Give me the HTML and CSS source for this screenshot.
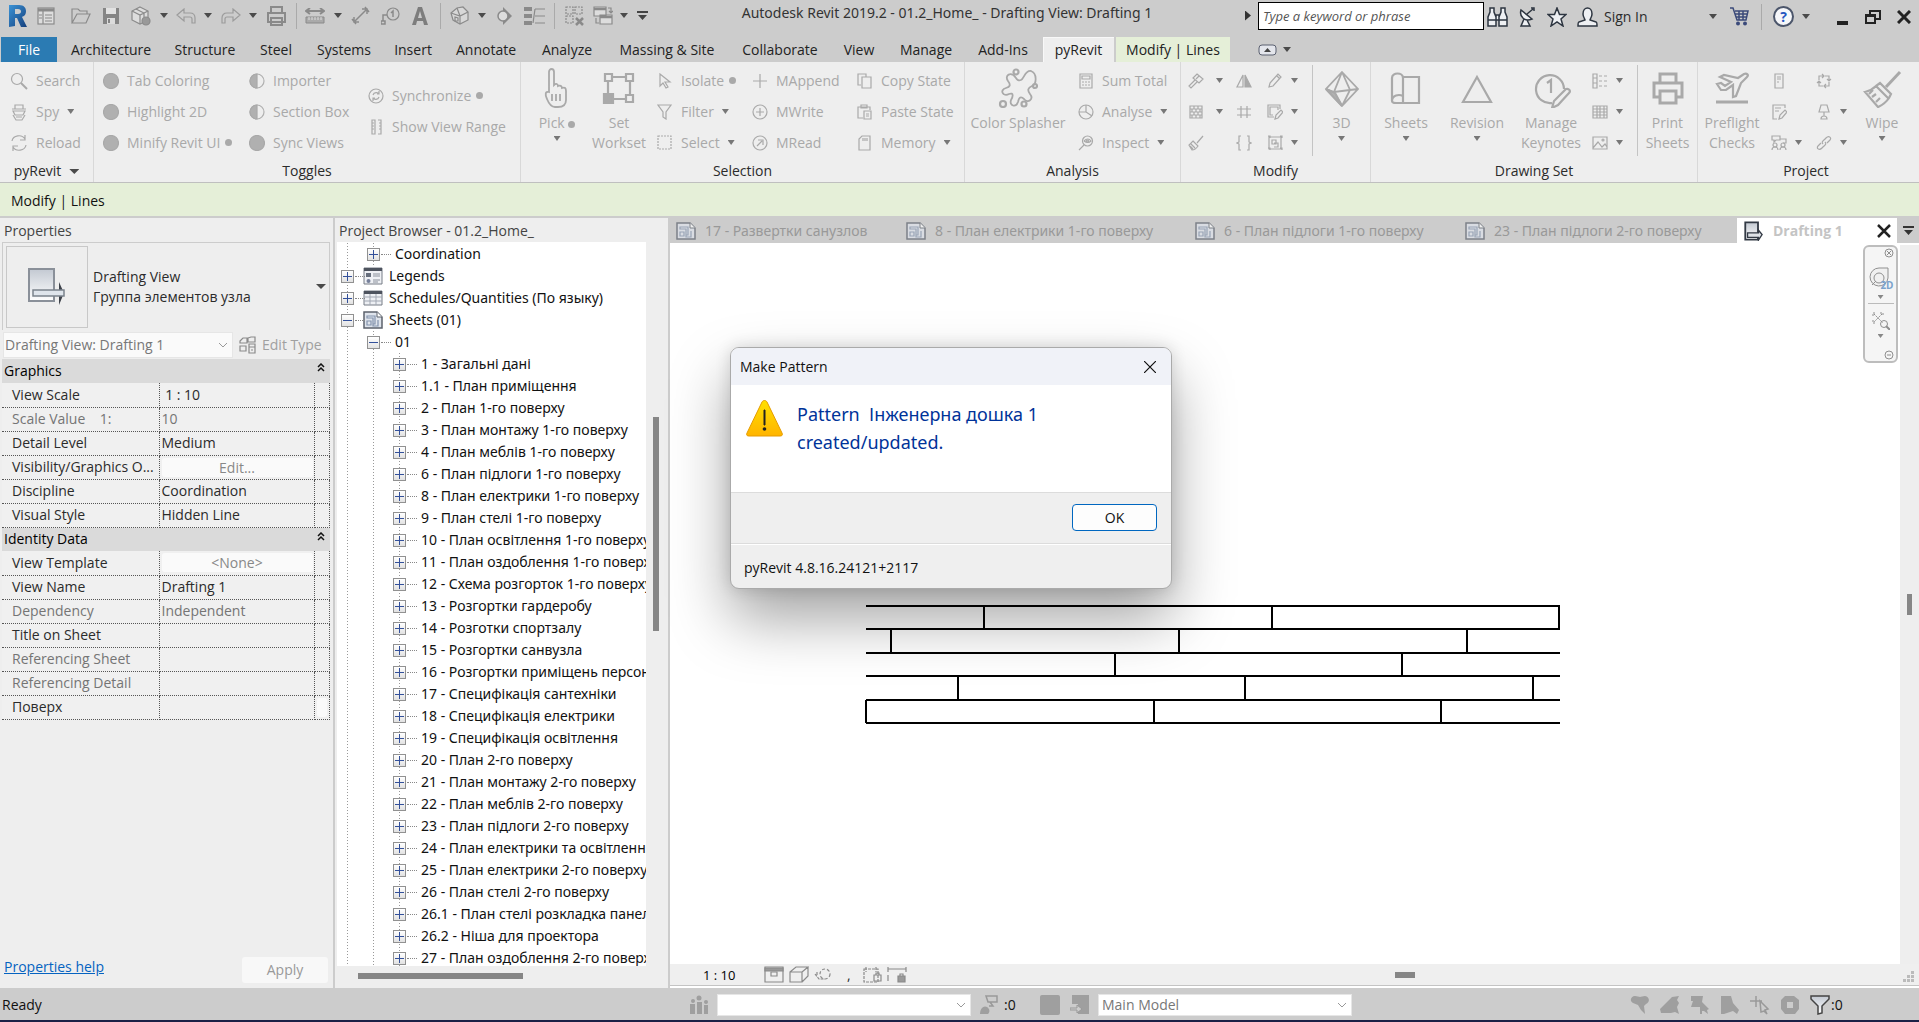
FILE: index.html
```html
<!DOCTYPE html>
<html lang="en">
<head>
<meta charset="utf-8">
<title>Autodesk Revit 2019.2 - 01.2_Home_ - Drafting View: Drafting 1</title>
<link rel="stylesheet" href="styles.css">
</head>
<body>
<svg class="sprite" aria-hidden="true">
  <defs>
    <linearGradient id="g-blue" x1="0" y1="0" x2="1" y2="1"><stop offset="0" stop-color="#3b93d6"/><stop offset="1" stop-color="#153f7c"/></linearGradient>
    <linearGradient id="g-warn" x1="0" y1="0" x2="0" y2="1"><stop offset="0" stop-color="#ffe000"/><stop offset="1" stop-color="#ffb400"/></linearGradient>
    <linearGradient id="g-metal" x1="0" y1="0" x2="0" y2="1"><stop offset="0" stop-color="#c3c9d2"/><stop offset="1" stop-color="#ffffff"/></linearGradient>
  </defs>
  <symbol id="sheet" viewBox="0 0 20 18"><path d="M1 1h13l5 5v11H1z" fill="#dfe4ec" stroke="#5c626c" stroke-width="1.500"/><path d="M14 1v5h5" fill="#fff" stroke="#5c626c"/><path d="M4 5h8v8h-2V7H4zM4 10h4v4H4zM10 13v2h5V9" fill="none" stroke="#8493ad" stroke-width="1.200"/></symbol>
  <symbol id="draft" viewBox="0 0 20 22"><path d="M1.500 1.500h14v19h-14z" fill="url(#g-metal)" stroke="#333a45" stroke-width="2"/><path d="M4 13h12v-3l4 5-4 6v-3H4z" fill="#dfe3e8" stroke="#333a45" stroke-width="1.500"/></symbol>
  <symbol id="half" viewBox="0 0 16 16"><circle cx="8" cy="8" r="7" fill="none" stroke="#b0b0b0"/><path d="M8 1a7 7 0 0 0 0 14z" fill="#b0b0b0"/></symbol>
  <symbol id="dot" viewBox="0 0 16 16"><circle cx="8" cy="8" r="7.500" fill="#b0b0b0"/></symbol>
</svg>

<header class="titlebar">
  <nav class="qat" aria-label="Quick access">
    <button aria-label="Revit"><svg width="20" height="24" viewBox="0 0 20 24"><path d="M1 1h10c5 0 7 3 7 6 0 4-2 5-4 6l5 10h-6L9 14H7v8l-6 1zM7 5v5h3c4 0 4-5 0-5z" fill="url(#g-blue)"/></svg></button>
    <button aria-label="Home"><svg width="18" height="18" viewBox="0 0 18 18" class="g"><rect x="1" y="1" width="16" height="16" fill="#ddd"/><path d="M1 3h16" stroke-width="3"/><path d="M6 4v13M8 8h7M8 11h7M8 14h7M2 8h3M2 11h3"/></svg></button>
    <button aria-label="Open"><svg width="20" height="18" viewBox="0 0 20 18" class="g"><path d="M1 16V2h6l2 2h7v3M1 16L6 7h13l-4 9z"/></svg></button>
    <button aria-label="Save"><svg width="18" height="18" viewBox="0 0 18 18"><path d="M1 1h16v16H1z" fill="#858585"/><path d="M4 1h10v6H4z" fill="#e2e2e2"/><path d="M5 11h8v6H5z" fill="#dcdcdc"/><path d="M6 12h2v4H6z" fill="#858585"/></svg></button>
    <button aria-label="Synchronize"><svg width="20" height="20" viewBox="0 0 20 20" class="g"><path d="M9 1l8 4v9l-8 4-8-4V5z" fill="#ddd"/><path d="M1 5l8 4 8-4M9 9v9M5 3l8 4v4"/><circle cx="15" cy="15" r="4" fill="#999"/></svg></button>
    <span class="caret"></span>
    <button aria-label="Undo"><svg width="20" height="16" viewBox="0 0 20 16" class="g l"><path d="M1 7l7-6v4h6c3 0 5 2 5 5v5h-3v-4c0-1-1-2-2-2H8v4z"/></svg></button>
    <span class="caret"></span>
    <button aria-label="Redo"><svg width="20" height="16" viewBox="0 0 20 16" class="g l"><path d="M19 7l-7-6v4H6c-3 0-5 2-5 5v5h3v-4c0-1 1-2 2-2h6v4z"/></svg></button>
    <span class="caret"></span>
    <button aria-label="Print"><svg width="21" height="20" viewBox="0 0 21 20" class="g w"><path d="M5 7V1h11v6M2 7h17v9H2zM5 12h11v7H5z"/></svg></button>
    <i class="sep"></i>
    <button aria-label="Measure"><svg width="20" height="16" viewBox="0 0 20 16" class="g w"><path d="M2 3h16M5 0L1 3l4 3M15 0l4 3-4 3"/><path d="M1 9h18v6H1z" fill="#aaa" stroke-width="1"/><path d="M4 9v3M7 9v3M10 9v3M13 9v3M16 9v3" stroke="#ddd" stroke-width="1"/></svg></button>
    <span class="caret"></span>
    <button aria-label="Dimension"><svg width="19" height="19" viewBox="0 0 19 19" class="g"><path d="M4 15L15 4M3 11v5h5M11 3h5v5M1 13l4 5M14 1l4 5" stroke-width="1.500"/></svg></button>
    <button aria-label="Tag"><svg width="19" height="18" viewBox="0 0 19 18" class="g"><circle cx="12" cy="7" r="6"/><path d="M10 6l2-2v6M6 8H2v6M0 14h4v3H0z" stroke-width="1.500"/></svg></button>
    <button aria-label="Text"><svg width="16" height="18" viewBox="0 0 16 18"><path d="M6 0h4l6 18h-4l-1-4H5l-1 4H0zM6 11h4L8 4z" fill="#7d7d7d"/></svg></button>
    <i class="sep"></i>
    <button aria-label="3D view"><svg width="19" height="19" viewBox="0 0 19 19" class="g"><path d="M1 7l6-5 6-1 5 5v8l-8 4-7-4z" fill="#d8d8d8"/><path d="M1 7l9 3 8-4M10 10v8M7 2l3 8M5 11v4h3v-3z"/></svg></button>
    <span class="caret"></span>
    <button aria-label="Section"><svg width="16" height="18" viewBox="0 0 16 18" class="g"><path d="M7 0l9 9-9 9z" fill="#8a8a8a" stroke="none"/><circle cx="7" cy="9" r="5" fill="#ddd" stroke-width="1.500"/></svg></button>
    <button aria-label="Thin lines"><svg width="21" height="20" viewBox="0 0 21 20" class="g"><path d="M0 3h8M0 10h8M0 17h8" stroke-width="4"/><path d="M11 3h10M11 10h10M11 17h10M11 3l-2 14"/></svg></button>
    <i class="sep"></i>
    <button aria-label="Close hidden windows"><svg width="19" height="20" viewBox="0 0 19 20" class="g"><path d="M1 1h7v7H1zM10 1h7v7h-7zM1 10h7v7H1z" stroke-dasharray="2 1"/><path d="M11 12l7 7M18 12l-7 7" stroke-width="2.500"/></svg></button>
    <button aria-label="Switch windows"><svg width="20" height="20" viewBox="0 0 20 20" class="g"><path d="M1 1h12v9H1zM7 9h12v9H7z" fill="#ddd"/><path d="M1 3h12M7 11h12" stroke-width="2.500"/><path d="M15 2h3v5M16 5l2 2 2-2M3 12v5h3"/></svg></button>
    <span class="caret"></span>
    <button aria-label="Customize"><svg width="11" height="9" viewBox="0 0 11 9"><path d="M0 0h11v2H0zM1 4h9L5.500 9z" fill="#444"/></svg></button>
  </nav>
  <h1>Autodesk Revit 2019.2 - 01.2_Home_ - Drafting View: Drafting 1</h1>
  <form class="search"><i class="tri-right"></i><input type="text" placeholder="Type a keyword or phrase" aria-label="Search help"></form>
  <div class="info">
    <button aria-label="Search"><svg width="21" height="20" viewBox="0 0 21 20" class="n"><path d="M3 1h4v4l2 5v9H1v-9l2-5zM14 1h4v4l2 5v9h-8v-9l2-5zM9 8h3v5H9zM1 13h8M12 13h8"/></svg></button>
    <button aria-label="Subscription"><svg width="17" height="20" viewBox="0 0 17 20" class="n"><path d="M2 3c-2 7 4 12 11 9zM8 7l6-5M12 1h3v3M5 12l-3 7h9l-3-6"/></svg></button>
    <button aria-label="Favorites"><svg width="20" height="20" viewBox="0 0 20 20" class="n"><path d="M10 1l2.500 6.500H19L14 12l2 7-6-4-6 4 2-7-5-4.500h6.500z"/></svg></button>
    <button aria-label="Account"><svg width="21" height="20" viewBox="0 0 21 20" class="n"><path d="M6 7c0-8 9-8 9 0 0 3-2 5-2 6l6 2c1 0 1 2 1 4H1c0-2 0-4 1-4l6-2c0-1-2-3-2-6z"/></svg></button>
    <button class="signin">Sign In</button>
    <span class="caret"></span>
    <button aria-label="Exchange"><svg width="21" height="19" viewBox="0 0 21 19"><path d="M1 1h3l4 12h9l2-9H6M6 7h12M7 10h11M10 4v9M14 4v9" fill="none" stroke="#3b4a7a" stroke-width="1.500"/><circle cx="9" cy="16.500" r="2" fill="#3b4a7a"/><circle cx="16" cy="16.500" r="2" fill="#3b4a7a"/></svg></button>
    <i class="sep"></i>
    <button class="help" aria-label="Help">?</button>
    <span class="caret"></span>
    <button aria-label="Minimize"><svg width="11" height="16" viewBox="0 0 11 16"><path d="M0 12h11v4H0z" fill="#222"/></svg></button>
    <button aria-label="Restore"><svg width="16" height="14" viewBox="0 0 16 14"><path d="M5 4V1h10v8h-4M1 5h9v8H1z" fill="none" stroke="#222" stroke-width="2"/><path d="M0 4h11v3H0z" fill="#222"/></svg></button>
    <button aria-label="Close"><svg width="14" height="14" viewBox="0 0 14 14"><path d="M1 1l12 12M13 1L1 13" stroke="#222" stroke-width="3"/></svg></button>
  </div>
</header>

<nav class="tabs" aria-label="Ribbon tabs">
  <button class="file">File</button><button>Architecture</button><button>Structure</button><button>Steel</button><button>Systems</button><button>Insert</button><button>Annotate</button><button>Analyze</button><button>Massing &amp; Site</button><button>Collaborate</button><button>View</button><button>Manage</button><button>Add-Ins</button><button class="on">pyRevit</button><button class="ctx">Modify | Lines</button>
  <button class="min" aria-label="Minimize ribbon"><svg width="19" height="12" viewBox="0 0 19 12"><rect x="1" y="1" width="17" height="10" rx="3" fill="#e4e6ec" stroke="#5b6070"/><path d="M6 8l3.500-4L13 8z" fill="#444"/></svg><span class="caret"></span></button>
</nav>

<section class="ribbon">
  <div class="group g-pyrevit">
    <div class="body">
      <div class="col wide">
        <button><svg viewBox="0 0 18 18"><circle cx="7" cy="7" r="5.500"/><path d="M11 11l6 6" stroke-width="2"/></svg>Search</button>
        <button><svg viewBox="0 0 18 18"><path d="M2 6h14M5 6V2h8v4M3 8h12l-2 4H5zM3 12l3 5h6l3-5M6 14h6"/></svg>Spy<span class="caret"></span></button>
        <button><svg viewBox="0 0 18 18"><path d="M2 7c1-6 10-7 13-2M15 1v5h-5M16 11c-1 6-10 7-13 2M3 17v-5h5"/></svg>Reload</button>
      </div>
    </div>
    <button class="label">pyRevit<span class="caret"></span></button>
  </div>

  <div class="group g-toggles">
    <div class="body">
      <div class="col">
        <button><svg><use href="#dot"/></svg>Tab Coloring</button>
        <button><svg><use href="#dot"/></svg>Highlight 2D</button>
        <button><svg><use href="#dot"/></svg>Minify Revit UI<i class="bullet"></i></button>
      </div>
      <div class="col">
        <button><svg><use href="#half"/></svg>Importer</button>
        <button><svg><use href="#half"/></svg>Section Box</button>
        <button><svg><use href="#dot"/></svg>Sync Views</button>
      </div>
      <div class="col mid">
        <button><svg viewBox="0 0 16 16"><circle cx="8" cy="8" r="7"/><path d="M5 7c1-3 5-3 6-1M11 3v3H9M11 9c-1 3-5 3-6 1M5 13v-3h2"/></svg>Synchronize<i class="bullet"></i></button>
        <button><svg viewBox="0 0 16 16"><path d="M4 1h3v14H4zM10 1h3v14h-3M4 4h2M4 7h2M4 10h2M11 4h2M11 7h2M11 10h2"/></svg>Show View Range</button>
      </div>
    </div>
    <div class="label">Toggles</div>
  </div>

  <div class="group g-selection">
    <div class="body">
      <button class="big"><svg viewBox="3 0 40 40"><path d="M15 24V4c0-4 5-4 5 0v13c2-2 4-1 4 1 2-1 4 0 4 2 3-1 4 0 4 3v9c0 5-3 7-8 7h-3c-4 0-6-3-8-8-2-4-2-8 2-7zM18 26v7M22 26v7M26 26v7" stroke-width="1.800"/></svg><span>Pick <i class="bullet"></i></span><span class="caret"></span></button>
      <button class="big"><svg viewBox="0 0 40 40"><path d="M6 6h7v7H6zM27 6h7v7h-7zM27 27h7v7h-7zM13 9h14M13 31h14M9 13v14M31 13v14"/><path d="M5 26h9v9H5z" fill="#a9a9a9"/></svg><span>Set<br>Workset</span></button>
      <div class="col pad">
        <button><svg viewBox="0 0 16 16"><path d="M3 1v12l3-3 3 5 2-1-3-5h5z"/></svg>Isolate<i class="bullet"></i></button>
        <button><svg viewBox="0 0 16 16"><path d="M1 1h13L9 8v7l-3-2V8z"/></svg>Filter<span class="caret"></span></button>
        <button><svg viewBox="0 0 16 16"><path d="M1 1h13v13H1z" stroke-dasharray="2 1"/></svg>Select<span class="caret"></span></button>
      </div>
      <div class="col">
        <button><svg viewBox="0 0 16 16"><path d="M8 1v14M1 8h14"/></svg>MAppend</button>
        <button><svg viewBox="0 0 16 16"><circle cx="8" cy="8" r="7"/><path d="M8 4v8M4 8h8"/></svg>MWrite</button>
        <button><svg viewBox="0 0 16 16"><circle cx="8" cy="8" r="7"/><path d="M5 11l5-5M6 5h5v5"/></svg>MRead</button>
      </div>
      <div class="col">
        <button><svg viewBox="0 0 16 16"><path d="M4 12H1V1h8v3M5 4h9v11H5z"/></svg>Copy State</button>
        <button><svg viewBox="0 0 16 16"><path d="M6 14H1V3h12v3M4 4V1h6v3zM7 7h7v8H7zM9 10h3M9 12h3"/></svg>Paste State</button>
        <button><svg viewBox="0 0 16 16"><path d="M5 1h8v14H2V4zM6 3v3M8 3v3M10 3v3"/></svg>Memory<span class="caret"></span></button>
      </div>
    </div>
    <div class="label">Selection</div>
  </div>

  <div class="group g-analysis">
    <div class="body">
      <button class="big"><svg viewBox="0 0 40 40"><path d="M18 10c-5-7-12-3-8 3 3 4 2 6-2 7-7 2-3 9 3 6 5-2 4 3 2 6-2 6 5 8 7 2 1-5 3-6 6-3 4 5 10 0 6-5-3-4-2-6 2-8 5-2 5-13-1-15-6-1-7 8-10 9-2 1-4 0-5-2z" stroke-width="1.800"/><circle cx="18" cy="4" r="2.500"/><circle cx="37" cy="18" r="2"/><circle cx="5" cy="36" r="3"/><circle cx="26" cy="36" r="2.500"/></svg><span>Color Splasher</span></button>
      <div class="col pad7">
        <button><svg viewBox="0 0 16 16"><path d="M2 1h12v14H2zM4 3h8v3H4zM4 9h2M7 9h2M10 9h2M4 12h2M7 12h2M10 12h2"/></svg>Sum Total</button>
        <button><svg viewBox="0 0 16 16"><circle cx="8" cy="8" r="7"/><path d="M8 1v7l6 4M8 8H1"/></svg>Analyse<span class="caret"></span></button>
        <button><svg viewBox="0 0 16 16"><circle cx="9.500" cy="6" r="5"/><path d="M6 10l-5 5M6 6q4-4 7 0-3 3-7 0"/><circle cx="9.500" cy="6" r="1"/></svg>Inspect<span class="caret"></span></button>
      </div>
    </div>
    <div class="label">Analysis</div>
  </div>

  <div class="group g-modify">
    <div class="body">
      <div class="col ico far">
        <button aria-label="Match"><svg viewBox="0 0 16 16"><path d="M9 1l6 5-4 4-6-5zM7 7l-6 6 2 2 6-6M11 3l-3 3"/></svg><span class="caret"></span></button>
        <button aria-label="Patterns"><svg viewBox="0 0 16 16"><path d="M2 2h12v12H2zM2 5h12M2 8h12M2 11h12M6 2v3M10 2v3M4 5v3M8 5v3M12 5v3M6 8v3M10 8v3M4 11v3M8 11v3M12 11v3"/></svg><span class="caret"></span></button>
        <button aria-label="Clean"><svg viewBox="0 0 16 16"><path d="M15 1L9 8M5 6l5 5c-2 3-4 4-6 4L1 10zM3 9l4 4M2 11l3 3"/></svg></button>
      </div>
      <div class="col ico">
        <button aria-label="Flip"><svg viewBox="0 0 16 16"><path d="M7 2v12H1z"/><path d="M9 2v12h6z" fill="#aaa"/></svg></button>
        <button aria-label="Number"><svg viewBox="0 0 16 16"><path d="M5 2v12M11 2v12M1 5h14M1 11h14"/></svg></button>
        <button aria-label="Braces"><svg viewBox="0 0 16 16"><path d="M5 1H3v6L1 8l2 1v6h2M11 1h2v6l2 1-2 1v6h-2"/></svg></button>
      </div>
      <div class="col ico">
        <button aria-label="Edit"><svg viewBox="0 0 16 16"><path d="M2 14l1-4 8-9 3 3-8 9zM10 3l3 3"/></svg><span class="caret"></span></button>
        <button aria-label="Regions"><svg viewBox="0 0 16 16"><path d="M7 13H1V1h12v4M6 11H3V3h8v3M8 15l1-4 5-5 2 2-5 6z"/></svg><span class="caret"></span></button>
        <button aria-label="Groups"><svg viewBox="0 0 16 16"><path d="M2 2h12v12H2zM5 5h4v4H5zM7 8h4v4H7M1 1h2v2M13 1h2v2M1 13h2v2M13 13h2v2"/></svg><span class="caret"></span></button>
      </div>
      <i class="sep"></i>
      <button class="big"><svg viewBox="0 0 40 40"><path d="M20 4l16 17-16 17L4 21zM20 4l-8 20 8 14M20 4l8 18-8 16M4 21l8 3 16-2 8-1" stroke-width="1.800"/><path d="M20 38l-7-13-9-4z" fill="#b3b3b3"/></svg><span>3D</span><span class="caret"></span></button>
    </div>
    <div class="label">Modify</div>
  </div>

  <div class="group g-drawing">
    <div class="body">
      <button class="big"><svg viewBox="0 0 40 40"><path d="M6 33V10c0-6 11-6 11 0v18c-4-2-11-1-11 5 0 2 2 2 4 2h23V9H17M17 28v7"/></svg><span>Sheets</span><span class="caret"></span></button>
      <button class="big"><svg viewBox="0 0 40 40"><path d="M20 9l14 25H6z"/></svg><span>Revision</span><span class="caret"></span></button>
      <button class="big"><svg viewBox="0 0 40 40"><path d="M21 35a14 14 0 1 1 12-14M16 15l4-3v13M21 40l2-7 12-12c3-1 5 2 3 4L27 37z"/></svg><span>Manage<br>Keynotes</span></button>
      <div class="col ico pad3">
        <button aria-label="Legends"><svg viewBox="0 0 16 16"><path d="M1 1h4v14H1zM1 5h4M1 10h4M7 3h3M12 3h3M7 8h3M12 8h3M7 13h3M12 13h3"/></svg><span class="caret"></span></button>
        <button aria-label="Schedules"><svg viewBox="0 0 16 16"><path d="M1 2h14v12H1zM1 5h14M1 8h14M1 11h14M5 2v12M8 2v12M12 2v12"/></svg><span class="caret"></span></button>
        <button aria-label="Images"><svg viewBox="0 0 16 16"><path d="M1 2h14v12H1zM1 13l5-6 4 5 3-3 2 3"/><circle cx="11" cy="5" r="1"/></svg><span class="caret"></span></button>
      </div>
      <i class="sep"></i>
      <button class="big"><svg viewBox="0 0 40 40" class="b"><path d="M12 15V6h16v9M12 29H6V15h28v14h-6M12 23h16v12H12z"/></svg><span>Print<br>Sheets</span></button>
    </div>
    <div class="label">Drawing Set</div>
  </div>

  <div class="group g-project">
    <div class="body">
      <button class="big"><svg viewBox="0 0 40 40"><path d="M4 34h32" stroke-width="3"/><path d="M5 16l4-1 4 3 6-4-11-5 4-2 14 3 6-4c3-1 5 1 3 3l-6 6-5 13-3 1v-12l-7 5H9z"/></svg><span>Preflight<br>Checks</span></button>
      <div class="col ico pad5">
        <button aria-label="Server"><svg viewBox="0 0 16 16"><path d="M4 1h8v14H4zM6 4h4M6 6h4M6 9h2"/></svg></button>
        <button aria-label="Notes"><svg viewBox="0 0 16 16"><path d="M6 15H2V1h12v3M4 4h6M4 7h4M8 15l1-4 5-5 2 2-5 6z"/></svg></button>
        <button aria-label="Team"><svg viewBox="0 0 16 16"><path d="M1 1h8v4H5L3 7V5H1zM9 4h6v4h-3"/><circle cx="4" cy="10" r="2"/><circle cx="12" cy="10" r="2"/><path d="M1 15c0-4 6-4 6 0M9 15c0-4 6-4 6 0"/></svg><span class="caret"></span></button>
      </div>
      <div class="col ico">
        <button aria-label="Transfer"><svg viewBox="0 0 16 16"><path d="M3 7V3h5M6 1l2 2-2 2M9 3h4v5M11 6l2 2 2-2M13 9v4H8M10 11l-2 2 2 2M7 13H3V8M1 10l2-2 2 2"/></svg></button>
        <button aria-label="Light"><svg viewBox="0 0 16 16"><path d="M5 1h6l2 7H3zM8 8v4M5 15c0-4 6-4 6 0z"/></svg><span class="caret"></span></button>
        <button aria-label="Links"><svg viewBox="0 0 16 16"><path d="M7 9c-2-2 0-3 3-6 3-3 6 0 4 2l-3 3M9 7c2 2 0 3-3 6-3 3-6 0-4-2l3-3"/></svg><span class="caret"></span></button>
      </div>
      <button class="big"><svg viewBox="0 0 40 40"><path d="M38 4L24 19" stroke-width="3"/><path d="M14 18l4-3 11 11-2 4c-4 6-9 8-11 9L3 24c4-1 8-3 11-6zM14 18l13 13M10 29l4-3M14 34l4-4M7 26l4-4"/></svg><span>Wipe</span><span class="caret"></span></button>
    </div>
    <div class="label">Project</div>
  </div>
</section>

<div class="context">Modify | Lines</div>

<main>
  <aside class="props">
    <h2>Properties</h2>
    <button class="type">
      <span class="thumb"><svg width="40" height="38" viewBox="0 0 40 38"><path d="M2 1h25v32H2z" fill="url(#g-metal)" stroke="#8a9099" stroke-width="2"/><path d="M32 14l5 11-5 12z" fill="#3c4149"/><path d="M6 22h31v6H6z" fill="#dfe5ec" stroke="#7b828c" stroke-width="1.500"/></svg></span>
      <span>Drafting View<br>Группа элементов узла</span>
      <span class="caret"></span>
    </button>
    <div class="filter">
      <select disabled aria-label="Element filter"><option>Drafting View: Drafting 1</option></select>
      <button disabled><svg width="18" height="18" viewBox="0 0 18 18" class="g"><path d="M1 5l3-3h4v5H1zM9 2l3-1h4v5H9zM1 10h6v5H1zM10 8h6v9h-6zM10 11h6M12 14h2"/></svg>Edit Type</button>
    </div>
    <table>
      <colgroup><col class="c1"><col><col class="c3"></colgroup>
      <tbody>
        <tr class="head"><th colspan="3" scope="colgroup">Graphics<svg width="8" height="9" viewBox="0 0 8 9"><path d="M1 4l3-3 3 3M1 8l3-3 3 3"/></svg></th></tr>
        <tr><th scope="row">View Scale</th><td>&nbsp;1 : 10</td><td></td></tr>
        <tr class="off"><th scope="row">Scale Value &nbsp; &nbsp;1:</th><td>10</td><td></td></tr>
        <tr><th scope="row">Detail Level</th><td>Medium</td><td></td></tr>
        <tr><th scope="row">Visibility/Graphics O...</th><td><button disabled>Edit...</button></td><td></td></tr>
        <tr><th scope="row">Discipline</th><td>Coordination</td><td></td></tr>
        <tr><th scope="row">Visual Style</th><td>Hidden Line</td><td></td></tr>
        <tr class="head"><th colspan="3" scope="colgroup">Identity Data<svg width="8" height="9" viewBox="0 0 8 9"><path d="M1 4l3-3 3 3M1 8l3-3 3 3"/></svg></th></tr>
        <tr><th scope="row">View Template</th><td><button disabled>&lt;None&gt;</button></td><td></td></tr>
        <tr><th scope="row">View Name</th><td>Drafting 1</td><td></td></tr>
        <tr class="off"><th scope="row">Dependency</th><td>Independent</td><td></td></tr>
        <tr><th scope="row">Title on Sheet</th><td></td><td></td></tr>
        <tr class="off"><th scope="row">Referencing Sheet</th><td></td><td></td></tr>
        <tr class="off"><th scope="row">Referencing Detail</th><td></td><td></td></tr>
        <tr><th scope="row">Поверх</th><td></td><td><button aria-label="Associate parameter"></button></td></tr>
      </tbody>
    </table>
    <footer><a href="#help">Properties help</a><button disabled>Apply</button></footer>
  </aside>

  <aside class="browser">
    <h2>Project Browser - 01.2_Home_</h2>
    <div class="tree">
      <ul>
        <li><ul><li><div><b></b>Coordination</div></li></ul></li>
        <li><div><b></b><svg width="20" height="18" viewBox="0 0 20 18"><path d="M1 1h18v16H1z" fill="#eef0f4" stroke="#777d86"/><path d="M1 1h18v3H1z" fill="#4d535e"/><path d="M3 6h5v4H3z" fill="#666e7c"/><path d="M10 7h7M10 9h7M10 13h7M10 15h5" stroke="#8a909b"/><circle cx="5.500" cy="14" r="2" fill="#76809a"/></svg>Legends</div></li>
        <li><div><b></b><svg width="20" height="16" viewBox="0 0 20 16"><path d="M1 1h18v14H1z" fill="#eef0f4" stroke="#777d86"/><path d="M1 1h18v3H1z" fill="#4d535e"/><path d="M1 7h18M1 11h18M7 4v11M13 4v11" stroke="#a2a8b3"/></svg>Schedules/Quantities (По языку)</div></li>
        <li><div><b class="open"></b><svg width="20" height="18"><use href="#sheet"/></svg>Sheets (01)</div>
          <ul>
            <li><div><b class="open"></b>01</div>
              <ul>
                <li><div><b></b>1 - Загальні дані</div></li>
                <li><div><b></b>1.1 - План приміщення</div></li>
                <li><div><b></b>2 - План 1-го поверху</div></li>
                <li><div><b></b>3 - План монтажу 1-го поверху</div></li>
                <li><div><b></b>4 - План меблів 1-го поверху</div></li>
                <li><div><b></b>6 - План підлоги 1-го поверху</div></li>
                <li><div><b></b>8 - План електрики 1-го поверху</div></li>
                <li><div><b></b>9 - План стелі 1-го поверху</div></li>
                <li><div><b></b>10 - План освітлення 1-го поверху</div></li>
                <li><div><b></b>11 - План оздоблення 1-го поверху</div></li>
                <li><div><b></b>12 - Схема розгорток 1-го поверху</div></li>
                <li><div><b></b>13 - Розгортки гардеробу</div></li>
                <li><div><b></b>14 - Розготки спортзалу</div></li>
                <li><div><b></b>15 - Розгортки санвузла</div></li>
                <li><div><b></b>16 - Розгортки приміщень персоналу</div></li>
                <li><div><b></b>17 - Специфікація сантехніки</div></li>
                <li><div><b></b>18 - Специфікація електрики</div></li>
                <li><div><b></b>19 - Специфікація освітлення</div></li>
                <li><div><b></b>20 - План 2-го поверху</div></li>
                <li><div><b></b>21 - План монтажу 2-го поверху</div></li>
                <li><div><b></b>22 - План меблів 2-го поверху</div></li>
                <li><div><b></b>23 - План підлоги 2-го поверху</div></li>
                <li><div><b></b>24 - План електрики та освітлення</div></li>
                <li><div><b></b>25 - План електрики 2-го поверху</div></li>
                <li><div><b></b>26 - План стелі 2-го поверху</div></li>
                <li><div><b></b>26.1 - План стелі розкладка панелей</div></li>
                <li><div><b></b>26.2 - Ніша для проектора</div></li>
                <li><div><b></b>27 - План оздоблення 2-го поверху</div></li>
              </ul>
            </li>
          </ul>
        </li>
      </ul>
    </div>
    <div class="vbar"><i></i></div>
    <div class="hbar"><i></i></div>
  </aside>

  <section class="view">
    <nav class="docs" aria-label="Open views">
      <button><svg width="20" height="18"><use href="#sheet"/></svg>17 - Развертки санузлов</button>
      <button><svg width="20" height="18"><use href="#sheet"/></svg>8 - План електрики 1-го поверху</button>
      <button><svg width="20" height="18"><use href="#sheet"/></svg>6 - План підлоги 1-го поверху</button>
      <button><svg width="20" height="18"><use href="#sheet"/></svg>23 - План підлоги 2-го поверху</button>
      <div class="on"><svg width="20" height="20"><use href="#draft"/></svg><span>Drafting 1</span><button aria-label="Close view"><svg width="14" height="14" viewBox="0 0 14 14"><path d="M1 1l12 12M13 1L1 13" stroke="#222" stroke-width="2.500"/></svg></button></div>
      <button class="more" aria-label="List views"><svg width="11" height="9" viewBox="0 0 11 9"><path d="M0 0h11v2H0zM1 4h9L5.500 9z" fill="#333"/></svg></button>
    </nav>
    <div class="canvas">
      <svg class="planks" width="696" height="120" viewBox="0 0 696 120"><path d="M1 1h694M1 24h694M1 48h694M1 71h694M1 95h694M1 118h694M119 1v23M407 1v23M694 1v23M26 24v24M314 24v24M602 24v24M250 48v23M537 48v23M93 71v24M380 71v24M668 71v24M1 95v23M289 95v23M576 95v23"/></svg>
      <div class="navbar">
        <button class="end" aria-label="Close navigation bar"><svg width="10" height="10" viewBox="0 0 10 10"><circle cx="5" cy="5" r="4"/><path d="M3 3l4 4M7 3L3 7"/></svg></button>
        <button aria-label="Steering wheel"><svg width="26" height="24" viewBox="0 0 26 24"><path d="M11 1h9v10a9 9 0 1 1-9-10z" fill="#f0f0f0"/><circle cx="11" cy="11" r="5"/><path d="M4 18l4-4M14 14l3 3"/></svg><small>2D</small></button>
        <span class="caret"></span>
        <hr>
        <button aria-label="Zoom"><svg width="18" height="18" viewBox="0 0 18 18"><path d="M2 2l9 9M10 2L2 10M1 4V1h3M8 1h3v3M1 8v3h3" stroke-dasharray="2 1"/><circle cx="12" cy="12" r="3.500"/><path d="M14 14l4 4" stroke-width="2"/></svg></button>
        <span class="caret"></span>
        <button class="end" aria-label="Collapse"><svg width="10" height="10" viewBox="0 0 10 10"><circle cx="5" cy="5" r="4"/><path d="M3 5h4"/></svg></button>
      </div>
    </div>
    <div class="side"><i></i></div>
    <div class="controls">
      <button class="scale">1 : 10</button>
      <button aria-label="Detail level"><svg width="20" height="18" viewBox="0 0 20 18" class="g"><path d="M1 1h18v15H1zM7 6h6v4H7z"/><path d="M1 2h18v3H1z" fill="#999"/></svg></button>
      <button aria-label="Visual style"><svg width="20" height="18" viewBox="0 0 20 18" class="g"><path d="M1 6h12v10H1zM1 6l6-5h12l-6 5M19 1v9l-6 6"/></svg></button>
      <button aria-label="Shadows"><svg width="18" height="18" viewBox="0 0 18 18" class="g"><circle cx="11" cy="8" r="5" stroke-dasharray="3 2"/><path d="M1 8l4 5h6M3 6v4" stroke-dasharray="3 1"/></svg></button>
      <span>,</span>
      <button aria-label="Crop"><svg width="20" height="18" viewBox="0 0 20 18" class="g"><path d="M1 3h14v13H1zM3 1v5M13 1v5" stroke-dasharray="3 1"/><path d="M11 9h7v6h-7zM13 9V7h3v2"/></svg></button>
      <button aria-label="Constraints"><svg width="20" height="18" viewBox="0 0 20 18" class="g"><path d="M1 1v5M19 1v5M1 3h18M1 9v6"/><path d="M11 10h7v6h-7z" fill="#999"/><path d="M13 10V8h3v2"/></svg></button>
      <i class="thumb"></i>
      <svg class="grip" width="12" height="12" viewBox="0 0 12 12"><path d="M8 0h3v3H8zM8 4h3v3H8zM4 4h3v3H4zM8 8h3v3H8zM4 8h3v3H4zM0 8h3v3H0z" fill="#bbb"/></svg>
    </div>
  </section>
</main>

<footer class="status">
  <span class="ready">Ready</span>
  <svg width="20" height="20" viewBox="0 0 20 20"><circle cx="10" cy="3" r="2.500"/><path d="M1 9h5v10H1zM8 7h5v12H8zM15 10h4v9h-4z"/><circle cx="4" cy="6" r="2"/><circle cx="17" cy="7" r="2"/></svg>
  <select disabled aria-label="Workset"><option></option></select>
  <svg width="18" height="20" viewBox="0 0 18 20"><path d="M6 1h11v6H8zM10 7l3 4H9" style="fill:none" stroke="#999" stroke-width="1.500"/><path d="M0 19c0-6 4-9 7-7s3 5 1 7z"/></svg>
  <span class="req">:0</span>
  <svg width="20" height="20" viewBox="0 0 20 20"><rect width="20" height="20" rx="2"/></svg>
  <svg width="20" height="20" viewBox="0 0 20 20"><path d="M2 0h17v19H8V9H2z"/><path d="M0 13h7v-3l5 4-5 4v-3H0z" style="fill:#ccc" stroke="#999"/></svg>
  <select disabled aria-label="Design option"><option>Main Model</option></select>
  <div class="toggles">
    <svg viewBox="0 0 20 20"><path d="M5 1c2 0 4 1 5 1s3-1 5-1c5 1 5 6 1 8l-2 2 1 8-4-4-3-5-5-2C-1 6 1 1 5 1z"/></svg>
    <svg viewBox="0 0 20 20"><path d="M0 14L12 2l7-1-2 4 2 3-2 4 2 7-4-2-4 1H1z"/></svg>
    <svg viewBox="0 0 20 20"><path d="M1 1h12l-1 6 7 7-2 1 1 4-4-3h-2v3h-2v-7H1l1-3 1-3H1z"/></svg>
    <svg viewBox="0 0 20 20"><path d="M1 1h10l2 7 6 7-2 4-4-3-9 3H1z"/></svg>
    <svg viewBox="0 0 20 20"><path d="M6 1v11M0 6h12M10 6l8 8-3 1 2 4-3-3-3 1z" style="fill:none" stroke="#999" stroke-width="1.500"/></svg>
    <svg viewBox="0 0 20 20"><path d="M5 1h9l5 4v9l-4 5H5l-4-5V5zM7 7v6h6V7z" fill-rule="evenodd"/></svg>
    <svg viewBox="0 0 20 20"><path d="M1 1h18v3l-7 7v7l-4 1v-8L1 4z" style="fill:url(#g-metal)" stroke="#444" stroke-width="1.500"/></svg>
    <span>:0</span>
  </div>
</footer>

<dialog open aria-labelledby="dlg-title">
  <header><h2 id="dlg-title">Make Pattern</h2><button aria-label="Close"><svg width="12" height="12" viewBox="0 0 12 12"><path d="M0 0l12 12M12 0L0 12" stroke="#111" stroke-width="1.200"/></svg></button></header>
  <div class="msg"><svg width="37" height="37" viewBox="0 0 37 37"><path d="M16 2c1-2 4-2 5 0l15 31c1 2 0 3-2 3H3c-2 0-3-1-2-3z" fill="url(#g-warn)" stroke="#e59b00"/><path d="M18 10h1v15h-1z" fill="#222" stroke="#222"/><circle cx="18.500" cy="29" r="1.800" fill="#222"/></svg><p>Pattern&nbsp; Інженерна дошка 1<br>created/updated.</p></div>
  <div class="actions"><button autofocus>OK</button></div>
  <div class="foot">pyRevit 4.8.16.24121+2117</div>
</dialog>
</body>
</html>
```
FILE: styles.css
```css
* { box-sizing: border-box; }
html, body { height: 100%; }
body {
  margin: 0;
  display: flex;
  flex-direction: column;
  overflow: hidden;
  background: #ccc;
  color: #2b2b2b;
  font: 14px/20px "Open Sans", "Noto Sans", sans-serif;
  border-bottom: 2px solid #1b2046;
}
button, input, select { font: inherit; color: inherit; }
button { border: 0; padding: 0; margin: 0; background: none; white-space: nowrap; }
h1, h2, p, ul { margin: 0; padding: 0; font: inherit; }
ul { list-style: none; }
svg { flex: none; display: block; }
.sprite { position: absolute; width: 0; height: 0; }
.g { fill: none; stroke: #8a8a8a; stroke-width: 1.2; }
.g.w { stroke-width: 2; }
.g.l { stroke: #9c9c9c; }
.n { fill: #eef0f3; stroke: #2d3540; stroke-width: 1.5; }

.caret {
  flex: none;
  width: 8px;
  height: 5px;
  background: #4a4a4a;
  clip-path: polygon(0 0, 100% 0, 50% 100%);
}
.bullet {
  display: inline-block;
  flex: none;
  width: 7px;
  height: 7px;
  border-radius: 50%;
  background: #a9a9a9;
}
.sep { width: 1px; background: #aaa; }

/* Title bar */
.titlebar { display: flex; height: 37px; flex: none; }
.qat {
  display: grid;
  grid-template-columns: 29px 34px 31px 29px 29px 16px 28px 17px 28px 17px 30px 9px 29px 17px 30px 31px 28px 10px 28px 18px 28px 30px 11px 28px 27px 17px 12px;
  align-items: center;
  height: 31px;
  padding-left: 8px;
}
.qat .sep, .info .sep { height: 26px; }
.titlebar h1 { flex: 1; text-align: center; line-height: 26px; white-space: nowrap; color: #333; font-family: "Noto Sans", sans-serif; }
.search { display: flex; align-items: center; height: 31px; gap: 7px; }
.tri-right { width: 6px; height: 10px; background: #333; clip-path: polygon(0 0, 100% 50%, 0 100%); }
.search input {
  width: 226px;
  height: 28px;
  border: 1px solid #000;
  background: #fff;
  padding: 0 4px;
  font-size: 13px;
}
.search input::placeholder { color: #555; font-style: italic; opacity: 1; }
.info {
  display: grid;
  grid-template-columns: 32px 28px 30px 27px 105px 20px 32px 12px 29px 35px 28px 32px 22px;
  align-items: center;
  height: 33px;
  padding-left: 3px;
}
.signin { text-align: left; }
.help {
  width: 21px;
  height: 21px;
  border: 2px solid #4c566b;
  border-radius: 50%;
  background: #f6f7fa;
  color: #2456c0;
  font-weight: 700;
  line-height: 17px;
}

/* Ribbon tabs */
.tabs {
  display: grid;
  grid-template-columns: 56px 104px 84px 58px 78px 60px 86px 76px 124px 102px 56px 78px 76px 71px 114px 1fr;
  column-gap: 0;
  height: 25px;
  flex: none;
  padding-left: 1px;
}
.tabs button { line-height: 25px; color: #222; }
.tabs .file { background: #2b7bb3; color: #fff; }
.tabs button:not(.file) { margin-left: 2px; margin-right: -2px; }
.tabs .on, .tabs .ctx { background: #eee; }
.tabs .on { box-shadow: inset 1px 1px #f8f8f8; }
.tabs button.on { margin-left: 4px; margin-right: -4px; }
.tabs button.ctx { margin-left: 6px; margin-right: -6px; background: #e5efd8; }
.tabs button.min { display: flex; align-items: center; gap: 6px; margin-left: 34px; }

/* Ribbon */
.ribbon {
  display: flex;
  flex: none;
  height: 121px;
  background: #eee;
  border-bottom: 1px solid #bfbfbf;
}
.group { display: flex; flex-direction: column; padding-top: 3px; border-right: 1px solid #d8d8d8; color: #a9a9a9; }
.group:last-child { flex: 1; border: 0; }
.body { display: grid; height: 93px; }
.body svg { fill: none; stroke: #a9a9a9; stroke-width: 1.2; }
.body .sep { height: 91px; background: #c4c4c4; }
.label { line-height: 25px; text-align: center; color: #2b2b2b; }
.label .caret { display: inline-block; width: 10px; margin: 0 0 2px 8px; }
.col button { display: flex; align-items: center; gap: 8px; height: 31px; }
.col svg { width: 16px; height: 16px; }
.col .bullet { margin-left: -3px; }
.col .caret { background: #777; width: 7px; }
.wide svg { width: 18px; height: 18px; }
.mid { padding-top: 15px; }
.pad { padding-left: 12px; }
.pad7 { padding-left: 7px; }
.pad5 { padding-left: 5px; }
.pad3 { padding-left: 3px; }
.col.far button { gap: 12px; }
.big { display: flex; flex-direction: column; align-items: center; padding-top: 3px; }
.big svg { width: 40px; height: 40px; margin-bottom: 5px; stroke-width: 2.2; }
.big svg.b { stroke-width: 3; }
.big .caret { width: 7px; margin-top: 3px; background: #777; }
.g-pyrevit { width: 94px; }
.g-pyrevit .body { padding-left: 10px; }
.g-toggles { width: 427px; }
.g-toggles .body { padding-left: 9px; grid-template-columns: 146px 119px 1fr; }
.g-selection { width: 444px; }
.g-selection .body { grid-template-columns: 72px 52px 107px 105px 1fr; }
.g-analysis { width: 216px; }
.g-analysis .body { grid-template-columns: 106px 1fr; }
.g-modify { width: 190px; }
.g-modify .body { padding-left: 7px; grid-template-columns: 48px 31px 45px 1px 1fr; }
.g-drawing { width: 327px; }
.g-drawing .body { grid-template-columns: 70px 72px 76px 48px 1px 1fr; }
.g-project { padding-right: 5px; }
.g-project .body { grid-template-columns: 68px 50px 36px 60px; }

.context { flex: none; height: 33px; padding-left: 11px; line-height: 35px; background: #e5efd8; color: #111; }

/* Work area */
main { display: flex; flex: 1; min-height: 0; padding-top: 2px; }
.props, .browser { background: #eee; display: flex; flex-direction: column; }
h2 { color: #444; }
.props h2, .browser h2 { height: 24px; line-height: 25px; padding-left: 4px; }
.props { width: 333px; margin-right: 2px; padding: 0 3px 0 0; }
.props h2 { flex: none; }
.type {
  display: flex;
  align-items: center;
  gap: 5px;
  height: 88px;
  margin-left: 2px;
  padding: 0 3px;
  border: 1px solid #ccc;
  border-bottom: 0;
  text-align: left;
}
.type .thumb { display: grid; place-items: center; width: 82px; height: 82px; border: 1px solid #c8c8c8; }
.type .caret { width: 10px; margin-left: auto; }
.filter { display: flex; gap: 6px; height: 29px; padding: 2px 0 1px 3px; color: #7a7a7a; }
select {
  appearance: none;
  border: 1px solid #e6e6e6;
  border-radius: 0;
  padding: 0 3px;
  opacity: 1;
  color: #777;
  background: #fafafa url("data:image/svg+xml,%3Csvg xmlns='http://www.w3.org/2000/svg' width='10' height='6'%3E%3Cpath d='M1 1l4 4 4-4' fill='none' stroke='%23999'/%3E%3C/svg%3E") no-repeat right 4px center;
}
.filter select { width: 230px; padding: 0 1px; }
.filter button { display: flex; align-items: center; gap: 5px; color: #a0a0a0; }
.props table { width: 328px; margin-left: 2px; border-collapse: collapse; table-layout: fixed; background: #f0f0f0; }
.c1 { width: 157px; }
.c3 { width: 15px; }
.props tr { height: 24px; }
.props th, .props td { padding: 0 0 0 2px; font-weight: 400; text-align: left; line-height: 20px; white-space: nowrap; border: 1px dotted #555; border-top: 0; }
.props th { padding-left: 10px; border-left: 0; }
.props .head th { position: relative; padding-left: 2px; background: #dadada; border: 0; color: #000; }
.head svg { position: absolute; right: 5px; top: 4px; fill: none; stroke: #111; stroke-width: 1.5; }
.off { color: #757575; }
.props td button { display: block; width: 151px; height: 19px; line-height: 19px; background: #fafafa; border-radius: 3px; color: #888; }
.props td:last-child button { width: 10px; }
.props footer { display: flex; justify-content: space-between; align-items: flex-start; margin-top: auto; padding: 0 2px 5px 4px; }
.props a { color: #0563c1; }
.props footer button { width: 86px; height: 26px; background: #f8f8f8; border-radius: 3px; color: #999; }

.browser {
  width: 333px;
  display: grid;
  grid-template-columns: 311px 1fr;
  grid-template-rows: 24px minmax(0, 1fr) 22px;
}
.browser h2 { grid-column: 1 / 3; }
.tree { margin-left: 2px; padding-top: 1px; background: #fff; overflow: hidden; color: #111; font-family: "Noto Sans", sans-serif; }
.tree ul {
  background: repeating-linear-gradient(#999 0 1px, transparent 1px 3px) 10px 0 / 1px 100% no-repeat;
}
.tree ul ul { margin-left: 26px; }
.tree div { display: flex; align-items: center; height: 22px; padding-left: 4px; white-space: nowrap; }
.tree b {
  position: relative;
  flex: none;
  width: 13px;
  height: 13px;
  margin-right: 15px;
  border: 1px solid #919191;
  background: linear-gradient(#33509a, #33509a) center / 9px 1px no-repeat, linear-gradient(#33509a, #33509a) center / 1px 9px no-repeat, linear-gradient(#fff, #e2e2e2);
}
.tree b.open { background: linear-gradient(#33509a, #33509a) center / 9px 1px no-repeat, linear-gradient(#fff, #e2e2e2); }
.tree b::after { content: ""; position: absolute; left: 13px; top: 5px; width: 10px; border-top: 1px dotted #888; }
.tree svg { margin: 0 6px 0 -6px; }
.vbar i { display: block; width: 6px; height: 214px; margin: 175px 0 0 7px; background: #868686; }
.hbar i { display: block; width: 165px; height: 6px; margin: 7px 0 0 23px; background: #868686; }

.view {
  flex: 1;
  min-width: 0;
  display: grid;
  grid-template-columns: 1fr 19px;
  grid-template-rows: 25px minmax(0, 1fr) 24px;
  margin-left: 2px;
}
.docs { grid-column: 1 / 3; display: grid; grid-template-columns: 230px 289px 270px 272px 160px 1fr; color: #999; padding-left: 6px; }
.docs > button { display: flex; align-items: center; gap: 9px; font-family: "Noto Sans", sans-serif; }
.docs svg { opacity: .7; }
.docs .on { display: flex; align-items: center; gap: 10px; padding: 0 6px; background: #fff; color: #c4c4c4; font-weight: 700; }
.docs .on svg { opacity: 1; }
.docs .on button { margin-left: auto; }
.docs .more { justify-content: center; }
.docs .more svg { opacity: 1; }
.canvas { position: relative; background: #fff; overflow: hidden; }
.planks { position: absolute; left: 195px; top: 362px; fill: none; stroke: #000; stroke-width: 2; }
.navbar {
  position: absolute;
  right: 2px;
  top: 2px;
  width: 35px;
  height: 118px;
  display: flex;
  flex-direction: column;
  align-items: center;
  background: #f5f5f5;
  border: 2px solid #bdbdbd;
  border-radius: 6px;
}
.navbar svg { fill: none; stroke: #8f8f8f; }
.navbar .end { align-self: flex-end; padding: 1px 2px; }
.navbar .caret { width: 6px; height: 4px; margin: 4px 0; background: #888; }
.navbar hr { width: 26px; margin: 0 0 8px; border: 0; border-top: 1px solid #bbb; }
.navbar button { position: relative; flex: none; }
.navbar button:nth-child(2) { margin-top: 8px; }
.navbar .end:last-child { margin-top: auto; }
.navbar small { position: absolute; right: 0; bottom: 0; font: 700 10px/12px "Open Sans", sans-serif; color: #7ba3cc; }
.side { background: #eee; border-top: 2px solid #fff; }
.side i { display: block; width: 5px; height: 21px; margin: 349px 0 0 7px; background: #868686; }
.controls {
  grid-column: 1 / 3;
  display: grid;
  grid-template-columns: 61px 25px 25px 33px 16px 24px 508px 20px 1fr;
  align-items: center;
  padding-left: 33px;
  background: #efefef;
  border-bottom: 2px solid #fff;
  box-shadow: inset 0 -1px #c4c4c4;
}
.controls .scale { font-size: 13px; color: #000; text-align: left; }
.controls .thumb { width: 20px; height: 6px; background: #868686; }
.grip { justify-self: end; align-self: end; margin: 0 4px 3px 0; }

/* Status bar */
.status { flex: none; display: flex; align-items: center; height: 32px; padding: 1px 0 0 2px; color: #111; }
.status svg { fill: #9f9f9f; }
.status .ready { flex: 0 0 687px; }
.status select { width: 254px; height: 22px; margin: 0 9px 0 8px; background-color: #fff; color: #777; }
.status .req { width: 36px; margin: 0 0 0 6px; }
.status .req + svg { margin-right: 10px; }
.toggles { display: flex; align-items: center; gap: 10px; margin-left: auto; padding-right: 72px; }
.toggles svg { width: 20px; height: 20px; }
.toggles span { width: 16px; margin-left: -9px; }

/* Task dialog */
dialog {
  position: absolute;
  left: 730px;
  top: 347px;
  width: 442px;
  margin: 0;
  padding: 0;
  border: 1px solid #aaa;
  border-radius: 9px;
  overflow: hidden;
  background: #efefef;
  color: #111;
  box-shadow: 0 30px 60px rgba(0, 0, 0, .36), 0 0 16px rgba(0, 0, 0, .14);
}
dialog header { display: flex; justify-content: space-between; align-items: center; height: 37px; padding: 0 15px 0 9px; background: #f0f2f8; }
dialog h2 { color: #111; }
.msg { display: flex; gap: 14px; height: 108px; padding: 15px; background: #fff; border-bottom: 1px solid #dcdcdc; }
.msg p { font: 18px/28px "Noto Sans", sans-serif; color: #003399; white-space: nowrap; }
.actions { display: flex; justify-content: flex-end; padding: 11px 14px 12px; border-bottom: 1px solid #dcdcdc; }
.actions button { width: 85px; height: 27px; border: 1px solid #0067c0; border-radius: 4px; background: #fdfdfd; outline: 0; }
.foot { height: 44px; padding-left: 13px; line-height: 45px; border-top: 1px solid #fff; }
```
